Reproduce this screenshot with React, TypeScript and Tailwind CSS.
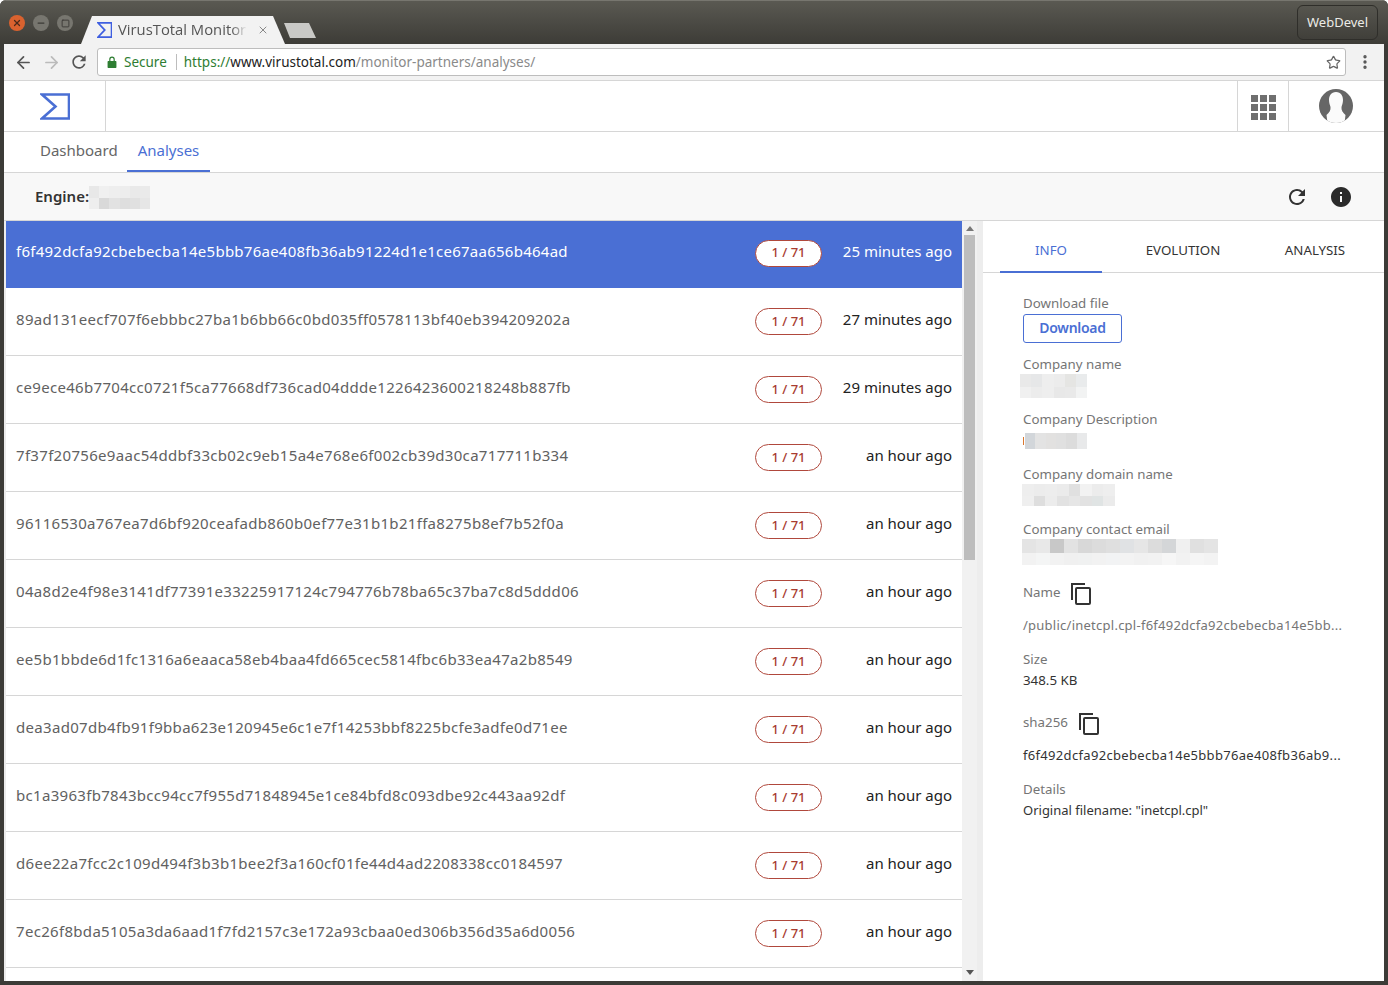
import { ArrowLeft, ArrowRight, Star, X, Minus, Square, EllipsisVertical } from "lucide-react";

const rows = [
  ["f6f492dcfa92cbebecba14e5bbb76ae408fb36ab91224d1e1ce67aa656b464ad", "25 minutes ago"],
  ["89ad131eecf707f6ebbbc27ba1b6bb66c0bd035ff0578113bf40eb394209202a", "27 minutes ago"],
  ["ce9ece46b7704cc0721f5ca77668df736cad04ddde1226423600218248b887fb", "29 minutes ago"],
  ["7f37f20756e9aac54ddbf33cb02c9eb15a4e768e6f002cb39d30ca717711b334", "an hour ago"],
  ["96116530a767ea7d6bf920ceafadb860b0ef77e31b1b21ffa8275b8ef7b52f0a", "an hour ago"],
  ["04a8d2e4f98e3141df77391e33225917124c794776b78ba65c37ba7c8d5ddd06", "an hour ago"],
  ["ee5b1bbde6d1fc1316a6eaaca58eb4baa4fd665cec5814fbc6b33ea47a2b8549", "an hour ago"],
  ["dea3ad07db4fb91f9bba623e120945e6c1e7f14253bbf8225bcfe3adfe0d71ee", "an hour ago"],
  ["bc1a3963fb7843bcc94cc7f955d71848945e1ce84bfd8c093dbe92c443aa92df", "an hour ago"],
  ["d6ee22a7fcc2c109d494f3b3b1bee2f3a160cf01fe44d4ad2208338cc0184597", "an hour ago"],
  ["7ec26f8bda5105a3da6aad1f7fd2157c3e172a93cbaa0ed306b356d35a6d0056", "an hour ago"],
];

const REFRESH =
  "M17.65 6.35A7.958 7.958 0 0012 4c-4.42 0-7.99 3.58-7.99 8s3.57 8 7.99 8c3.73 0 6.84-2.55 7.73-6h-2.08A5.99 5.99 0 0112 18c-3.31 0-6-2.69-6-6s2.69-6 6-6c1.66 0 3.14.69 4.22 1.78L13 11h7V4l-2.35 2.35z";

function Sigma({ className, color, width }: { className: string; color: string; width: number }) {
  return (
    <svg viewBox="0 0 30 27" className={className} fill="none" preserveAspectRatio="none">
      <path d="M2 1.500h27v24H2L15.500 13.500z" stroke={color} strokeWidth={width} />
    </svg>
  );
}

function CopyIcon() {
  return (
    <svg viewBox="0 0 20 22" className="mt-[3px] w-5 h-[22px]" fill="none" stroke="#333" strokeWidth="2">
      <path d="M1 17V1h13" />
      <rect x="5" y="5" width="14" height="16" rx="1" />
    </svg>
  );
}

function Blur({ w, h, rows, className = "" }: { w: number; h: number[]; rows: string[][]; className?: string }) {
  return (
    <div className={`flex flex-col ${className}`} style={{ width: w }}>
      {rows.map((cells, i) => (
        <div key={i} className="flex" style={{ height: h[i] }}>
          {cells.map((c, j) => (
            <div key={j} className="flex-1" style={{ backgroundColor: c }} />
          ))}
        </div>
      ))}
    </div>
  );
}

function Label({ children }: { children: React.ReactNode }) {
  return <div className="text-[13.3px] leading-[18px] text-[#757575]">{children}</div>;
}

export default function App() {
  return (
    <div className="w-[1388px] h-[985px] overflow-hidden bg-[#3c3b37] flex flex-col font-['Noto_Sans',sans-serif] rounded-t-md">
      {/* title bar */}
      <div className="relative h-[44px] shrink-0 border-t border-[#77766f] bg-gradient-to-b from-[#5a5952] to-[#3d3c37]">
        <div className="absolute left-[9px] top-[14px] flex gap-[8px]">
          <div className="w-4 h-4 rounded-full bg-[#d9622f] flex items-center justify-center">
            <X className="w-[10px] h-[10px] text-[#4a2a1a]" strokeWidth={3} />
          </div>
          <div className="w-4 h-4 rounded-full bg-[#77766f] flex items-center justify-center">
            <Minus className="w-[10px] h-[10px] text-[#3c3b37]" strokeWidth={3} />
          </div>
          <div className="w-4 h-4 rounded-full bg-[#77766f] flex items-center justify-center">
            <Square className="w-[9px] h-[9px] text-[#3c3b37]" strokeWidth={2.5} />
          </div>
        </div>
        <div className="absolute left-[81px] top-[15px] w-[204px] h-[28px] bg-[#f2f2f2] [clip-path:polygon(0_100%,11px_0,192px_0,100%_100%)] flex items-center pl-[16px]">
          <Sigma className="w-[15px] h-[16px]" color="#3f5fe0" width={3.2} />
          <span className="ml-[6px] w-[129px] overflow-hidden whitespace-nowrap text-[14.8px] leading-[20px] pb-[2px] text-[#555] font-['Open_Sans',sans-serif] [mask-image:linear-gradient(to_right,black_88%,transparent)]">VirusTotal Monitor</span>
          <X className="ml-[10px] w-[12px] h-[12px] text-[#888]" strokeWidth={2} />
        </div>
        <div className="absolute left-[284px] top-[22px] w-[32px] h-[15px] bg-[#c9c9c6] [clip-path:polygon(0_0,25px_0,100%_100%,6px_100%)]" />
        <div className="absolute right-[10px] top-[4px] w-[81px] h-[35px] pt-px rounded-md border border-[#2f2e2a] flex items-center justify-center text-[13px] text-[#ecebe6]">WebDevel</div>
      </div>

      {/* browser toolbar */}
      <div className="h-[36px] shrink-0 mx-[4px] bg-[#f2f2f2] flex items-center pl-[10px]">
        <ArrowLeft className="w-[19px] h-[19px] text-[#555]" strokeWidth={2.2} />
        <ArrowRight className="ml-[9px] w-[19px] h-[19px] text-[#bbb]" strokeWidth={2.2} />
        <svg viewBox="0 0 24 24" className="ml-[8px] w-[20px] h-[20px]" fill="#555">
          <path d={REFRESH} />
        </svg>
        <div className="ml-[8px] w-[1249px] h-[28px] rounded-[3px] border border-[#bdbdbd] bg-white flex items-center pl-[9px] text-[13.5px] leading-[18px] whitespace-nowrap">
          <svg viewBox="0 0 10 13" className="w-[10px] h-[12px]" fill="#2e7d32">
            <path d="M1 5.500h1V3.500a3 3 0 016 0v2h1a.8.8 0 01.8.8v5.900a.8.8 0 01-.8.8H1a.8.8 0 01-.8-.8V6.300A.8.8 0 011 5.500zM3.300 5.500h3.400v-2a1.700 1.700 0 00-3.400 0z" />
          </svg>
          <span className="ml-[7px] mb-px text-[#2e7d32]">Secure</span>
          <span className="ml-[9px] w-px h-[16px] bg-[#bdbdbd]" />
          <span className="ml-[7px] mb-px text-[#2e7d32]">https://</span>
          <span className="mb-px text-[#222]">www.virustotal.com</span>
          <span className="mb-px text-[#8a8a8a]">/monitor-partners/analyses/</span>
          <Star className="ml-auto mr-[4px] w-[15px] h-[15px] text-[#666]" strokeWidth={2} />
        </div>
        <EllipsisVertical className="ml-[10px] w-[18px] h-[18px] text-[#555]" strokeWidth={2.5} />
      </div>

      <div className="flex-1 mx-[4px] mb-[4px] bg-white flex flex-col min-h-0">
        {/* header */}
        <div className="h-[52px] shrink-0 border-y border-[#d6d6d6] flex items-center">
          <div className="w-[102px] h-full border-r border-[#d6d6d6] flex items-center pl-[36px]">
            <Sigma className="w-[30px] h-[27px]" color="#4a6fd4" width={2.6} />
          </div>
          <div className="ml-auto w-[51px] h-full border-l border-[#d6d6d6] flex items-center justify-center">
            <div className="mt-[3px] grid grid-cols-3 gap-[2px]">
              {Array.from({ length: 9 }).map((_, i) => (
                <div key={i} className="w-[7px] h-[7px] bg-[#6f6f6f]" />
              ))}
            </div>
          </div>
          <div className="w-[96px] h-full border-l border-[#d6d6d6] flex items-center pl-[30px]">
            <svg viewBox="0 0 34 34" className="w-[34px] h-[34px]">
              <defs>
                <clipPath id="avatar">
                  <circle cx="17" cy="17" r="17" />
                </clipPath>
              </defs>
              <circle cx="17" cy="17" r="17" fill="#666" />
              <path
                clipPath="url(#avatar)"
                d="M17 3c-5 0-7 4-7 8 0 3 1 5 1.500 7 .5 3-1.500 6-4 8l1 8h17l1-8c-2.500-2-4.500-5-4-8 .5-2 1.500-4 1.500-7 0-4-2-8-7-8z"
                fill="#fbfbfb"
              />
            </svg>
          </div>
        </div>

        {/* nav */}
        <div className="h-[41px] shrink-0 border-b border-[#d6d6d6] flex text-[15px] leading-[36px] pl-[23px]">
          <div className="w-[100px] pl-[13px] text-[#666]">Dashboard</div>
          <div className="w-[83px] text-center text-[#4a6fd4] border-b-2 border-[#4a6fd4] h-[40px]">Analyses</div>
        </div>

        {/* engine bar */}
        <div className="h-[48px] shrink-0 bg-[#f8f8f8] border-b border-[#d6d6d6] flex items-center pl-[31px] pr-[31px]">
          <span className="text-[15px] font-semibold text-[#333]">Engine:</span>
          <Blur
            w={61}
            h={[12, 11]}
            className="mt-[2px]"
            rows={[
              ["#e8e8e8", "#f0f0f0", "#eee", "#ededed", "#e9e9e9", "#eaeaea"],
              ["#eee", "#d9d9d9", "#e2e2e2", "#dedede", "#e0e0e0", "#e6e6e6"],
            ]}
          />
          <svg viewBox="0 0 24 24" className="ml-auto mt-px w-[24px] h-[24px]" fill="#333">
            <path d={REFRESH} />
          </svg>
          <svg viewBox="0 0 24 24" className="ml-[20px] mt-px w-[24px] h-[24px]" fill="#2b2b2b">
            <path d="M12 2C6.480 2 2 6.480 2 12s4.480 10 10 10 10-4.480 10-10S17.520 2 12 2zm1 15h-2v-6h2v6zm0-8h-2V7h2v2z" />
          </svg>
        </div>

        {/* body */}
        <div className="flex-1 flex min-h-0">
          <div className="w-[2px] shrink-0 bg-[#ececec]" />
          <div className="w-[956px] shrink-0 overflow-hidden">
            {rows.map(([hash, time], i) => (
              <div
                key={hash}
                className={`flex items-center pl-[10px] pr-[10px] border-b ${
                  i === 0 ? "h-[67px] pb-[6px] bg-[#4a6fd4] border-[#4a6fd4] text-white" : "h-[68px] pb-[4px] border-[#d6d6d6] text-[#222]"
                }`}
              >
                <span className={`text-[15px] ${i === 0 ? "text-white tracking-[0.25px]" : "text-[#616161] tracking-[0.31px]"}`}>{hash}</span>
                <span className="ml-auto mt-[4px] w-[67px] h-[27px] rounded-[14px] border border-[#b0483c] bg-white flex items-center justify-center text-[13px] font-medium text-[#a83c30]">1 / 71</span>
                <span className="w-[130px] text-right text-[15px]">{time}</span>
              </div>
            ))}
          </div>
          {/* scrollbar */}
          <div className="w-[15px] shrink-0 bg-[#f1f1f1] flex flex-col items-center pt-[5px] pb-[6px]">
            <div className="w-0 h-0 border-x-[4px] border-x-transparent border-b-[5px] border-b-[#777]" />
            <div className="mt-[4px] w-[11px] h-[325px] bg-[#bdbdbd]" />
            <div className="mt-auto w-0 h-0 border-x-[4px] border-x-transparent border-t-[5px] border-t-[#555]" />
          </div>
          <div className="w-[6px] shrink-0 bg-[#ededed]" />

          {/* info panel */}
          <div className="flex-1 min-w-0">
            <div className="h-[52px] border-b border-[#d6d6d6] flex gap-[30px] pl-[17px] text-[13.3px] leading-[58px]">
              <div className="w-[102px] h-[52px] text-center text-[#4a6fd4] border-b-2 border-[#4a6fd4]">INFO</div>
              <div className="w-[102px] text-center text-[#333]">EVOLUTION</div>
              <div className="w-[102px] text-center text-[#333]">ANALYSIS</div>
            </div>
            <div className="pl-[40px] pt-[21px] text-[13px] leading-[18px] text-[#333]">
              <Label>Download file</Label>
              <div className="mt-[2px] w-[99px] h-[29px] rounded-[3px] border border-[#4a6fd4] text-center text-[#4a6fd4] text-[14px] font-semibold tracking-[-0.3px] leading-[26px]">Download</div>
              <div className="mt-[12px]"><Label>Company name</Label></div>
              <Blur
                w={67}
                h={[13, 11]}
                className="-ml-[3px] mt-[1px]"
                rows={[
                  ["#e9e9e9", "#e6e7e8", "#eee", "#ececec", "#e5e5e3", "#e9ebec"],
                  ["#f0f0f0", "#ececec", "#eeeeee", "#e8e8e8", "#e9e9e9", "#f2f3f3"],
                ]}
              />
              <div className="mt-[12px]"><Label>Company Description</Label></div>
              <div className="mt-[5px] flex items-center">
                <div className="w-px h-[8px] bg-[#d9772f]" />
                <Blur
                  w={62}
                  h={[16]}
                  className="ml-px"
                  rows={[["#d2d6da", "#e3e3e3", "#e2e1e0", "#e0e0e0", "#dcdcdc", "#e8e9ea"]]}
                />
              </div>
              <div className="mt-[16px]"><Label>Company domain name</Label></div>
              <Blur
                w={93}
                h={[12, 10]}
                className="-ml-px mt-px"
                rows={[
                  ["#eeeeee", "#ececec", "#ededed", "#ebebeb", "#e0e0e0", "#f2f2f2", "#ececec", "#eeeeee"],
                  ["#efefef", "#dedede", "#ececec", "#e2e2e2", "#e6e6e6", "#e2e2e2", "#e0e4e4", "#ebebeb"],
                ]}
              />
              <div className="mt-[14px]"><Label>Company contact email</Label></div>
              <Blur
                w={196}
                h={[14, 12]}
                className="-ml-px mt-px"
                rows={[
                  ["#e4e4e4", "#e8e8e8", "#c8c8c8", "#e2e2e2", "#d8d8d8", "#dcdcdc", "#dfdfdf", "#e0e2e4", "#e6e6e6", "#dcdcdc", "#d4d6d8", "#f0f0f0", "#e0e0e0", "#e4e4e4"],
                  ["#f2f2f2", "#f4f5f5", "#f2f2f2", "#f0f0f0", "#f0f1f1", "#f2f2f2", "#f2f3f4", "#f3f3f3", "#f1f1f1", "#f2f2f2", "#f6f6f6", "#f2f2f2", "#f5f5f5", "#f3f3f3"],
                ]}
              />
              <div className="mt-[15px] flex items-center gap-[10px] h-[24px]">
                <Label>Name</Label>
                <CopyIcon />
              </div>
              <div className="mt-[12px] text-[#757575] whitespace-nowrap tracking-[0.25px]">/public/inetcpl.cpl-f6f492dcfa92cbebecba14e5bb...</div>
              <div className="mt-[16px]"><Label>Size</Label></div>
              <div className="mt-[3px] text-[13.3px]">348.5 KB</div>
              <div className="mt-[21px] flex items-center gap-[11px] h-[24px]">
                <Label>sha256</Label>
                <CopyIcon />
              </div>
              <div className="mt-[12px] whitespace-nowrap tracking-[0.32px]">f6f492dcfa92cbebecba14e5bbb76ae408fb36ab9...</div>
              <div className="mt-[16px]"><Label>Details</Label></div>
              <div className="mt-[3px]">Original filename: "inetcpl.cpl"</div>
            </div>
          </div>
        </div>
      </div>
    </div>
  );
}
